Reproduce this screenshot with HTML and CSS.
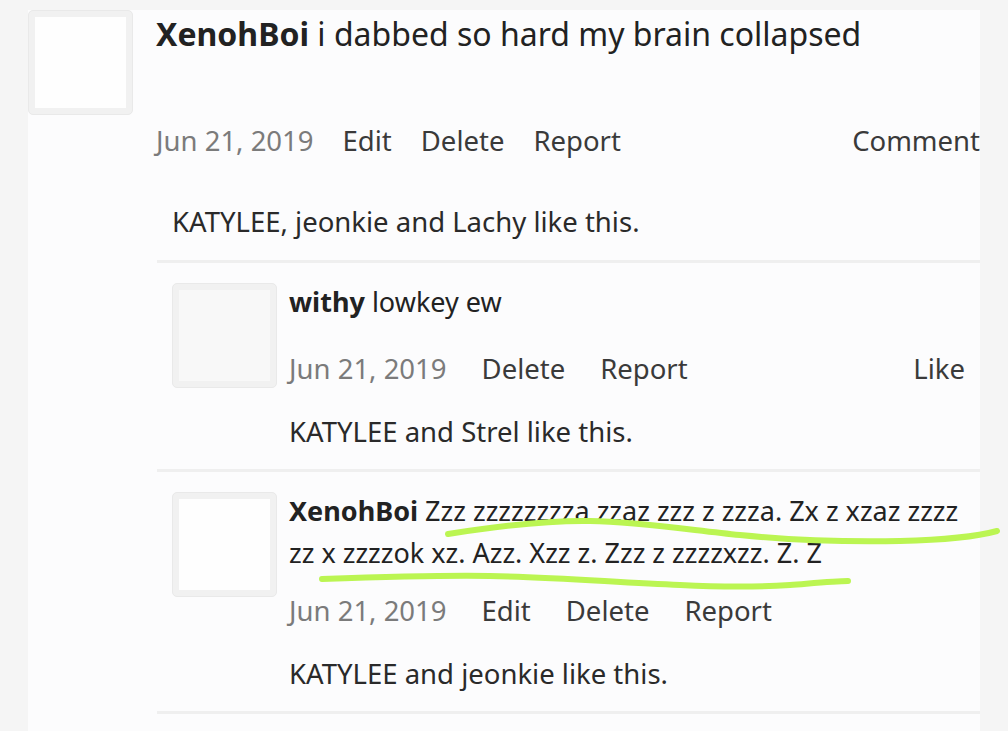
FILE: index.html
```html
<!DOCTYPE html>
<html lang="en">

<head>
	<meta charset="UTF-8">
	<title>Comments</title>
	<link rel="stylesheet" href="styles.css">
</head>

<body>
	<div class="page">
		<div class="thread">
			<div class="comment">
				<div class="avatar"><div class="avatar-img"></div></div>
				<div class="comment-main">
					<p class="comment-text"><b class="author">XenohBoi</b> i dabbed so hard my brain collapsed</p>
					<div class="meta meta-top">
						<span class="date">Jun 21, 2019</span>
						<a href="#">Edit</a>
						<a href="#">Delete</a>
						<a href="#">Report</a>
						<a href="#" class="meta-right">Comment</a>
					</div>
				</div>
			</div>

			<div class="replies">
				<p class="likes likes-top">KATYLEE, jeonkie and Lachy like this.</p>

				<div class="reply">
					<div class="avatar avatar-grey"><div class="avatar-img"></div></div>
					<div class="reply-main">
						<p class="reply-text"><b class="author">withy</b> lowkey ew</p>
						<div class="meta">
							<span class="date">Jun 21, 2019</span>
							<a href="#">Delete</a>
							<a href="#">Report</a>
							<a href="#" class="meta-right">Like</a>
						</div>
						<p class="likes">KATYLEE and Strel like this.</p>
					</div>
				</div>

				<div class="reply">
					<div class="avatar"><div class="avatar-img"></div></div>
					<div class="reply-main">
						<p class="reply-text"><b class="author">XenohBoi</b> Zzz zzzzzzzza zzaz zzz z zzza. Zx z xzaz zzzz zz x zzzzok xz. Azz. Xzz z. Zzz z zzzzxzz. Z. Z</p>
						<div class="meta">
							<span class="date">Jun 21, 2019</span>
							<a href="#">Edit</a>
							<a href="#">Delete</a>
							<a href="#">Report</a>
						</div>
						<p class="likes">KATYLEE and jeonkie like this.</p>
					</div>
				</div>
			</div>
		</div>
	</div>

	<!-- marker scribbles drawn over the screenshot -->
	<svg class="scribble" width="1008" height="731" viewBox="0 0 1008 731">
		<path d="M448,534 C480,529 540,520 590,521 C640,522 690,530 740,535 C790,540 850,542 900,541 C940,540 975,537 997,531" />
		<path d="M322,579 C380,577 440,575 490,576 C560,577 620,583 680,585 C720,587 760,587 790,585 C815,583 835,581 848,581" />
	</svg>
</body>

</html>
```

FILE: styles.css
```css
body {
	font-family: "Noto Sans", "Open Sans", sans-serif;
	margin: 0;
	padding: 0;
	background-color: #f5f5f5;
	color: #222;
	overflow: hidden;
}

.page {
	padding: 10px 28px 0 28px;
	width: 952px;
}

.thread {
	background: #fcfcfd;
	min-height: 721px;
}

.comment {
	display: flex;
	gap: 23px;
}

.avatar {
	width: 91px;
	height: 91px;
	padding: 6px;
	border: 1px solid #e9e9e9;
	border-radius: 5px;
	background: #f1f1f1;
	flex-shrink: 0;
}

.avatar-img {
	width: 100%;
	height: 100%;
	background: #fefefe;
}

.avatar-grey .avatar-img {
	background: #f8f8f8;
}

.comment-main {
	flex: 1;
}

.comment-text {
	margin: 0;
	font-size: 32px;
	line-height: 48px;
}

.author {
	font-weight: bold;
	color: #222;
}

.meta {
	display: flex;
	align-items: center;
	font-size: 27.5px;
	line-height: 42px;
	margin-top: 16px;
	padding-right: 15px;
}

.meta a {
	text-decoration: none;
	color: #3a3a3a;
	margin-left: 35px;
}

.meta-top {
	margin-top: 62px;
	padding-right: 0;
}

.meta-top a {
	margin-left: 29px;
}

.date {
	color: #7b7b7b;
}

.meta .meta-right {
	margin-left: auto;
}

.replies {
	margin-left: 129px;
	padding-top: 39px;
}

.likes {
	margin: 21px 0 0 0;
	font-size: 27.5px;
	line-height: 42px;
	color: #2a2a2a;
}

.likes-top {
	margin: 0;
	padding: 0 0 17px 15px;
	border-bottom: 3px solid #efefef;
}

.reply {
	display: flex;
	gap: 12px;
	padding: 18px 0 16px 15px;
	border-bottom: 3px solid #efefef;
}

.reply .avatar {
	margin-top: 2px;
}

.reply-main {
	flex: 1;
}

.reply-text {
	margin: 0;
	min-height: 51px;
	font-size: 27px;
	line-height: 42px;
}

.scribble {
	position: absolute;
	top: 0;
	left: 0;
	pointer-events: none;
}

.scribble path {
	fill: none;
	stroke: #bbf552;
	stroke-width: 6;
	stroke-linecap: round;
}
```
